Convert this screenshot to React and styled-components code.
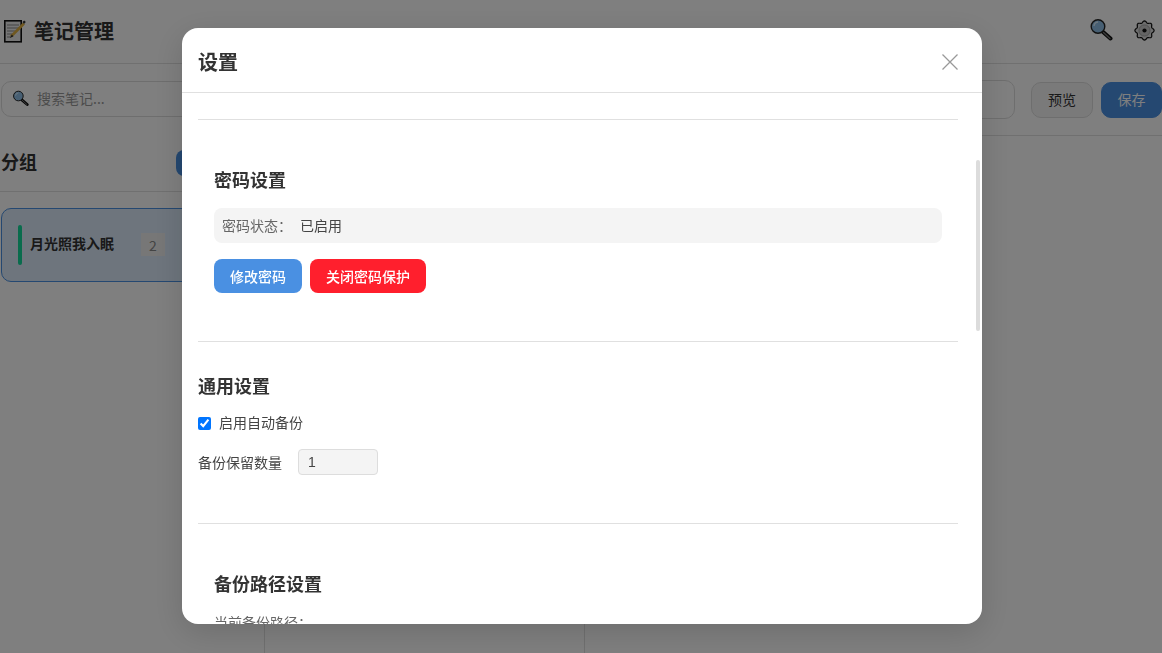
import React from 'react';
import styled, { createGlobalStyle } from 'styled-components';

const GlobalStyle = createGlobalStyle`
  html, body { margin: 0; padding: 0; height: 100%; overflow: hidden; }
  body {
    font-family: "Noto Sans CJK SC", "Liberation Sans", sans-serif;
    color: #333;
    background: #fff;
  }
  * { box-sizing: border-box; }
`

const Page = styled.div`
  width: 1162px;
  height: 653px;
  display: flex;
  flex-direction: column;
  background: #fff;
`

const Header = styled.header`
  height: 64px;
  flex-shrink: 0;
  display: flex;
  align-items: center;
  justify-content: space-between;
  padding: 0 7px 0 3px;
  border-bottom: 1px solid #e0e0e0;
`

const Brand = styled.div`
  display: flex;
  align-items: center;
  gap: 8px;
  font-size: 20px;
  line-height: 26px;
  font-weight: 700;
  color: #333;
  padding-bottom: 2px;
`

const HeaderTools = styled.div`
  display: flex;
  align-items: center;
  gap: 21px;
  padding-bottom: 3px;
`

const Columns = styled.div`
  flex: 1;
  display: flex;
  min-height: 0;
`

const Sidebar = styled.aside`
  width: 265px;
  flex-shrink: 0;
  border-right: 1px solid #e0e0e0;
  display: flex;
  flex-direction: column;
  padding-top: 17px;
`

const SearchBox = styled.div`
  height: 36px;
  margin: 0 16px 0 1px;
  display: flex;
  align-items: center;
  gap: 8px;
  padding: 0 0 2px 10px;
  border: 1px solid #ddd;
  border-radius: 10px;
  font-size: 14px;
  color: #999;
`

const GroupHead = styled.div`
  height: 75px;
  margin-bottom: 16px;
  padding: 18px 0 0 1px;
  display: flex;
  align-items: center;
  justify-content: space-between;
  border-bottom: 1px solid #e0e0e0;
`

const GroupLabel = styled.span`
  font-size: 18px;
  font-weight: 700;
  margin-bottom: 4px;
`

const AddGroup = styled.div`
  width: 60px;
  height: 26px;
  margin-right: 28px;
  background: #4a90e2;
  border-radius: 8px;
`

const GroupItem = styled.div`
  height: 74px;
  margin: 0 16px 0 1px;
  display: flex;
  align-items: center;
  padding-left: 16px;
  border: 1px solid #4a90e2;
  border-radius: 10px;
  background: #dcebfa;
`

const GroupBar = styled.span`
  width: 4px;
  height: 40px;
  border-radius: 2px;
  background: #12d89a;
  margin-right: 8px;
`

const GroupName = styled.span`
  font-size: 14px;
  font-weight: 700;
  color: #333;
  margin-bottom: 5px;
`

const Count = styled.span`
  width: 24px;
  height: 23px;
  margin: 0 0 1px 27px;
  display: flex;
  align-items: center;
  justify-content: center;
  background: #eee;
  font-size: 14px;
  color: #888;
`

const ListColumn = styled.section`
  width: 320px;
  flex-shrink: 0;
  border-right: 1px solid #e0e0e0;
`

const Editor = styled.section`
  flex: 1;
`

const EditorBar = styled.div`
  height: 72px;
  display: flex;
  align-items: center;
  gap: 8px;
  padding: 0 0 0 16px;
  border-bottom: 1px solid #e0e0e0;
`

const TitleInput = styled.div`
  flex: 1;
  height: 39px;
  margin-right: 8px;
  border: 1px solid #ddd;
  border-radius: 10px;
`

const BarButton = styled.div`
  width: ${props => props.$primary ? '61px' : '62px'};
  height: 36px;
  display: flex;
  align-items: center;
  justify-content: center;
  padding-bottom: 2px;
  border-radius: 10px;
  font-size: 14px;
  border: 1px solid ${props => props.$primary ? '#4a90e2' : '#ddd'};
  background: ${props => props.$primary ? '#4a90e2' : '#f5f5f5'};
  color: ${props => props.$primary ? '#fff' : '#333'};
`

const Overlay = styled.div`
  position: fixed;
  inset: 0;
  display: flex;
  align-items: flex-start;
  justify-content: center;
  padding: 28px 0 0 2px;
  background: rgba(0, 0, 0, 0.5);
`

const Modal = styled.div`
  position: relative;
  width: 800px;
  height: 596px;
  display: flex;
  flex-direction: column;
  background: #fff;
  border-radius: 16px;
  overflow: hidden;
  box-shadow: 0 8px 32px rgba(0, 0, 0, 0.15);
`

const ModalHead = styled.div`
  height: 65px;
  flex-shrink: 0;
  display: flex;
  align-items: center;
  justify-content: space-between;
  padding: 3px 24px 0 16px;
  border-bottom: 1px solid #e0e0e0;
`

const ModalTitle = styled.h2`
  margin: 0;
  font-size: 20px;
  font-weight: 700;
  color: #333;
`

const ModalBody = styled.div`
  flex: 1;
  overflow: hidden;
  padding: 26px 24px 0 16px;
`

const Thumb = styled.div`
  position: absolute;
  left: 794px;
  top: 132px;
  width: 4px;
  height: 171px;
  border-radius: 2px;
  background: #dcdcdc;
`

const Divider = styled.hr`
  margin: 0;
  border: 0;
  border-top: 1px solid #e0e0e0;
`

const Section = styled.section`
  padding: ${props => props.$inset ? '47px 16px 48px' : '31px 0 48px'};
`

const SectionTitle = styled.h3`
  margin: 0 0 ${props => props.$tight ? '15px' : '16px'};
  font-size: 18px;
  line-height: 25px;
  font-weight: 700;
  color: #333;
`

const StatusRow = styled.div`
  height: 35px;
  display: flex;
  align-items: center;
  padding: 0 8px 2px;
  gap: 8px;
  background: #f4f4f4;
  border-radius: 8px;
  font-size: 14px;
`

const StatusLabel = styled.span`
  color: #666;
`

const StatusValue = styled.span`
  color: #444;
`

const ButtonRow = styled.div`
  display: flex;
  gap: 8px;
  margin-top: 16px;
`

const ActionButton = styled.button`
  height: 34px;
  padding: 0 16px;
  border: 0;
  border-radius: 8px;
  font: 500 14px "Noto Sans CJK SC", "Liberation Sans", sans-serif;
  color: #fff;
  background: ${props => props.$danger ? '#ff1f2d' : '#4a90e2'};
`

const CheckRow = styled.label`
  display: flex;
  align-items: center;
  gap: 8px;
  height: 20px;
  font-size: 14px;
  color: #444;
`

const CheckText = styled.span`
  margin-bottom: 2px;
`

const Check = styled.input`
  width: 13px;
  height: 13px;
  margin: 0;
`

const CountRow = styled.div`
  display: flex;
  align-items: center;
  gap: 16px;
  margin-top: 16px;
  font-size: 14px;
  color: #444;
`

const CountInput = styled.input`
  width: 80px;
  height: 26px;
  padding: 0 9px;
  border: 1px solid #ddd;
  border-radius: 4px;
  background: #f4f4f4;
  font: 14px "Liberation Sans", sans-serif;
  color: #444;
`

const PathLabel = styled.div`
  font-size: 14px;
  color: #666;
`

const MemoIcon = () => (
  <svg width="23" height="24" viewBox="0 0 23 24">
    <rect x="1.8" y="1.8" width="16.4" height="21" fill="#ececec" stroke="#111" strokeWidth="1.6" />
    <path d="M4 6h12M4 9h12M4 12h9M4 15h6M4 18h4" stroke="#888" strokeWidth="1" />
    <path d="M8 17.5 21 4.5" stroke="#e0b040" strokeWidth="2.6" />
    <path d="M19.5 3 21.2 1.4 22.8 3 21 5z" fill="#333" />
    <path d="M8.8 15.5 7 19l3.5-1.7z" fill="#333" />
  </svg>
)

const SearchIcon = ({ size = 24 }) => (
  <svg width={size} height={size} viewBox="0 0 24 24">
    <path d="m13.5 13.5 8 7" stroke="#111" strokeWidth="4" strokeLinecap="round" />
    <path d="m14.5 14.5 6.5 6" stroke="#777" strokeWidth="1.4" strokeLinecap="round" />
    <circle cx="9" cy="8.5" r="6.8" fill="#8fbfe6" stroke="#222" strokeWidth="1.4" />
    <path d="M5 8a4.5 4.5 0 0 1 4-4" stroke="#d9efff" strokeWidth="1.4" fill="none" />
  </svg>
)

// scalloped gear outline, 8 teeth
const gearPoints = Array.from({ length: 96 }, (_, i) => {
  const angle = (i / 96) * Math.PI * 2
  const radius = 8.7 + 0.9 * Math.cos(angle * 8)
  return `${(10.5 + radius * Math.sin(angle)).toFixed(2)},${(10.5 - radius * Math.cos(angle)).toFixed(2)}`
}).join(' ')

const GearIcon = () => (
  <svg width="21" height="21" viewBox="0 0 21 21">
    <polygon points={gearPoints} fill="#dedede" stroke="#111" strokeWidth="1.2" strokeLinejoin="round" />
    <circle cx="10.5" cy="10.5" r="5.6" fill="#c8c8c8" stroke="#999" strokeWidth="0.8" />
    <circle cx="10.5" cy="10.5" r="2.1" fill="#111" />
  </svg>
)

const CloseIcon = () => (
  <svg width="16" height="16" viewBox="0 0 16 16">
    <path d="M.5.5l15 15M15.5.5l-15 15" stroke="#999" strokeWidth="1.3" fill="none" />
  </svg>
)

const App = () => {
  return (<>
    <GlobalStyle />
    <Page>
      <Header>
        <Brand><MemoIcon />笔记管理</Brand>
        <HeaderTools>
          <SearchIcon />
          <GearIcon />
        </HeaderTools>
      </Header>
      <Columns>
        <Sidebar>
          <SearchBox><SearchIcon size={17} />搜索笔记...</SearchBox>
          <GroupHead>
            <GroupLabel>分组</GroupLabel>
            <AddGroup />
          </GroupHead>
          <GroupItem>
            <GroupBar />
            <GroupName>月光照我入眠</GroupName>
            <Count>2</Count>
          </GroupItem>
        </Sidebar>
        <ListColumn />
        <Editor>
          <EditorBar>
            <TitleInput />
            <BarButton>预览</BarButton>
            <BarButton $primary>保存</BarButton>
          </EditorBar>
        </Editor>
      </Columns>
    </Page>
    <Overlay>
      <Modal>
        <ModalHead>
          <ModalTitle>设置</ModalTitle>
          <CloseIcon />
        </ModalHead>
        <ModalBody>
          <Divider />
          <Section $inset>
            <SectionTitle>密码设置</SectionTitle>
            <StatusRow>
              <StatusLabel>密码状态：</StatusLabel>
              <StatusValue>已启用</StatusValue>
            </StatusRow>
            <ButtonRow>
              <ActionButton>修改密码</ActionButton>
              <ActionButton $danger>关闭密码保护</ActionButton>
            </ButtonRow>
          </Section>
          <Divider />
          <Section>
            <SectionTitle $tight>通用设置</SectionTitle>
            <CheckRow>
              <Check type="checkbox" defaultChecked />
              <CheckText>启用自动备份</CheckText>
            </CheckRow>
            <CountRow>
              备份保留数量
              <CountInput type="text" defaultValue="1" />
            </CountRow>
          </Section>
          <Divider />
          <Section $inset>
            <SectionTitle>备份路径设置</SectionTitle>
            <PathLabel>当前备份路径：</PathLabel>
          </Section>
        </ModalBody>
        <Thumb />
      </Modal>
    </Overlay>
  </>);
}

export default App;
